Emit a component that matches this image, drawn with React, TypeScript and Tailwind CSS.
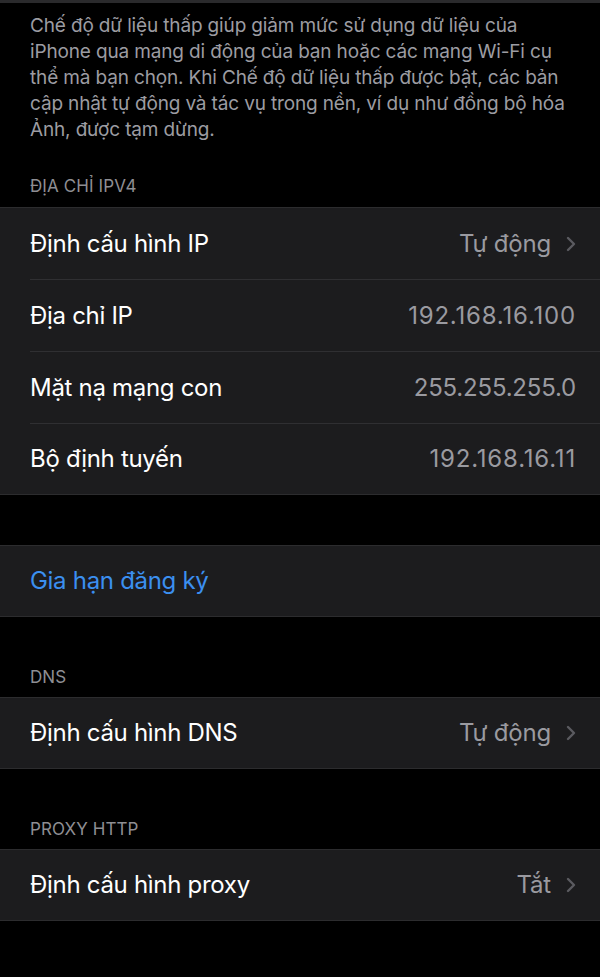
import { ReactNode } from 'react';

interface Row {
  label: string;
  value?: string;
  chevron?: boolean;
  wide?: boolean;
}

const ipv4Rows: Row[] = [
  { label: 'Định cấu hình IP', value: 'Tự động', chevron: true },
  { label: 'Địa chỉ IP', value: '192.168.16.100', wide: true },
  { label: 'Mặt nạ mạng con', value: '255.255.255.0' },
  { label: 'Bộ định tuyến', value: '192.168.16.11', wide: true },
];

function Chevron() {
  return (
    <svg width="10" height="16" viewBox="0 0 10 16" className="ml-[15px] shrink-0">
      <path d="M2 2l6 6-6 6" fill="none" stroke="#5b5b60" strokeWidth="2.4" strokeLinecap="round" strokeLinejoin="round" />
    </svg>
  );
}

function Group({ children }: { children: ReactNode }) {
  return <div className="bg-[#1c1c1e] border-y border-[#2c2c2e]">{children}</div>;
}

function Cell({ row, last }: { row: Row; last?: boolean }) {
  return (
    <div className="pl-[30px]">
      <div className={`flex items-center pr-[24px] ${last ? 'h-[70px]' : 'h-[72px] border-b border-[#2f2f32]'}`}>
        <span className="flex-1 text-[24px] text-white tracking-[-0.3px]">{row.label}</span>
        {row.value && (
          <span className={`text-[24px] text-[#9a9aa0] ${row.wide ? 'tracking-[0.8px]' : 'tracking-[-0.2px]'}`}>
            {row.value}
          </span>
        )}
        {row.chevron && <Chevron />}
      </div>
    </div>
  );
}

function Header({ title }: { title: string }) {
  return (
    <div className="h-[80px] flex items-end pb-[7px] px-[30px] text-[17px] text-[#8e8e93] tracking-[0.1px]">
      {title}
    </div>
  );
}

export default function App() {
  return (
    <div className="min-h-[977px] bg-black font-['Inter','Roboto',sans-serif] select-none">
      <div className="h-[3px] bg-[#2a2a2c]" />

      <p className="pt-[10px] px-[30px] text-[19px] leading-[26px] text-[#9c9ca2] tracking-[-0.15px]">
        Chế độ dữ liệu thấp giúp giảm mức sử dụng dữ liệu của iPhone qua mạng di động của bạn hoặc các mạng Wi-Fi cụ
        thể mà bạn chọn. Khi Chế độ dữ liệu thấp được bật, các bản cập nhật tự động và tác vụ trong nền, ví dụ như đồng bộ hóa
        Ảnh, được tạm dừng.
      </p>

      <div className="h-[64px] flex items-end pb-[8px] px-[30px] text-[17px] text-[#8e8e93] tracking-[0.1px]">
        ĐỊA CHỈ IPV4
      </div>

      <Group>
        {ipv4Rows.map((r, i) => (
          <Cell key={r.label} row={r} last={i === ipv4Rows.length - 1} />
        ))}
      </Group>

      <div className="h-[50px]" />

      <Group>
        <div className="h-[70px] flex items-center px-[30px] text-[24px] text-[#3b8ff0] tracking-[-0.3px]">
          Gia hạn đăng ký
        </div>
      </Group>

      <Header title="DNS" />
      <Group>
        <Cell row={{ label: 'Định cấu hình DNS', value: 'Tự động', chevron: true }} last />
      </Group>

      <Header title="PROXY HTTP" />
      <Group>
        <Cell row={{ label: 'Định cấu hình proxy', value: 'Tắt', chevron: true }} last />
      </Group>
    </div>
  );
}
